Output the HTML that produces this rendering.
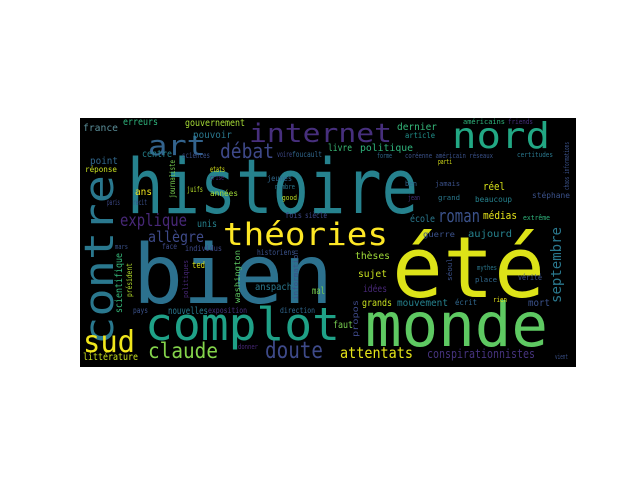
<!DOCTYPE html>
<html><head><meta charset="utf-8"><style>
html,body{margin:0;padding:0;background:#fff;width:640px;height:480px;overflow:hidden}
svg{display:block}
text{font-family:"DejaVu Sans Mono","Liberation Mono",monospace}
</style></head><body>
<svg width="640" height="480" viewBox="0 0 640 480" xmlns="http://www.w3.org/2000/svg">
<rect x="80" y="118" width="496" height="249" fill="#000"/>
<g>
<text x="127" y="213" font-size="76" fill="#26828e" textLength="291" lengthAdjust="spacingAndGlyphs">histoire</text>
<text x="133" y="303" font-size="82" fill="#2c718e" textLength="200" lengthAdjust="spacingAndGlyphs">bien</text>
<text x="392" y="297" font-size="85" fill="#dde318" textLength="153" lengthAdjust="spacingAndGlyphs">été</text>
<text x="365" y="346" font-size="61" fill="#5ec962" textLength="183" lengthAdjust="spacingAndGlyphs">monde</text>
<text x="145" y="340" font-size="45" fill="#1fa187" textLength="195" lengthAdjust="spacingAndGlyphs">complot</text>
<text transform="translate(113,345) rotate(-90)" font-size="40" fill="#2a788e" textLength="170" lengthAdjust="spacingAndGlyphs">contre</text>
<text x="249" y="142" font-size="26" fill="#472f7d" textLength="143" lengthAdjust="spacingAndGlyphs">internet</text>
<text x="452" y="148" font-size="36" fill="#22a884" textLength="98" lengthAdjust="spacingAndGlyphs">nord</text>
<text x="223" y="245" font-size="31" fill="#fde725" textLength="165" lengthAdjust="spacingAndGlyphs">théories</text>
<text x="148" y="155" font-size="28" fill="#33638d" textLength="58" lengthAdjust="spacingAndGlyphs">art</text>
<text x="220" y="158" font-size="20" fill="#3e4989" textLength="54" lengthAdjust="spacingAndGlyphs">débat</text>
<text x="83" y="352" font-size="30" fill="#f0e51c" textLength="52" lengthAdjust="spacingAndGlyphs">sud</text>
<text x="148" y="358" font-size="21" fill="#84d44b" textLength="70" lengthAdjust="spacingAndGlyphs">claude</text>
<text x="265" y="358" font-size="23" fill="#3e4a89" textLength="58" lengthAdjust="spacingAndGlyphs">doute</text>
<text x="120" y="226" font-size="17" fill="#482878" textLength="67" lengthAdjust="spacingAndGlyphs">explique</text>
<text x="148" y="242" font-size="15" fill="#3e4a89" textLength="56" lengthAdjust="spacingAndGlyphs">allègre</text>
<text x="438" y="222" font-size="18" fill="#3b528b" textLength="42" lengthAdjust="spacingAndGlyphs">roman</text>
<text transform="translate(561,303) rotate(-90)" font-size="14" fill="#2a788e" textLength="76" lengthAdjust="spacingAndGlyphs">septembre</text>
<text x="340" y="358" font-size="15" fill="#e5e419" textLength="73" lengthAdjust="spacingAndGlyphs">attentats</text>
<text x="427" y="358" font-size="12" fill="#46337e" textLength="108" lengthAdjust="spacingAndGlyphs">conspirationnistes</text>
<g font-size="10">
<text x="123" y="125" fill="#2fb47c" textLength="35" lengthAdjust="spacingAndGlyphs">erreurs</text>
<text x="185" y="126" fill="#a5db36" textLength="60" lengthAdjust="spacingAndGlyphs">gouvernement</text>
<text x="83" y="131" fill="#5b8f9a" textLength="35" lengthAdjust="spacingAndGlyphs">france</text>
<text x="193" y="138" fill="#2a788e" textLength="39" lengthAdjust="spacingAndGlyphs">pouvoir</text>
<text x="142" y="157" fill="#26828e" textLength="30" lengthAdjust="spacingAndGlyphs">centre</text>
<text x="90" y="164" fill="#31688e" textLength="28" lengthAdjust="spacingAndGlyphs">point</text>
<text x="85" y="172" fill="#c8e020" font-size="8" textLength="32" lengthAdjust="spacingAndGlyphs">réponse</text>
<text x="182" y="158" fill="#3b528b" font-size="8" textLength="28" lengthAdjust="spacingAndGlyphs">sciences</text>
<text x="277" y="157" fill="#3e4989" font-size="8" textLength="15" lengthAdjust="spacingAndGlyphs">voire</text>
<text x="292" y="157" fill="#31688e" font-size="8" textLength="30" lengthAdjust="spacingAndGlyphs">foucault</text>
<text x="210" y="172" fill="#d8e219" font-size="8" textLength="15" lengthAdjust="spacingAndGlyphs">etats</text>
<text x="210" y="180" fill="#482878" font-size="7" textLength="14" lengthAdjust="spacingAndGlyphs">crise</text>
<text transform="translate(175,198) rotate(-90)" fill="#7ad151" font-size="8" textLength="38" lengthAdjust="spacingAndGlyphs">journaliste</text>
<text x="135" y="195" fill="#f0e51c" textLength="17" lengthAdjust="spacingAndGlyphs">ans</text>
<text x="187" y="192" fill="#b5de2b" font-size="8" textLength="16" lengthAdjust="spacingAndGlyphs">juifs</text>
<text x="210" y="196" fill="#a0da39" font-size="8" textLength="28" lengthAdjust="spacingAndGlyphs">années</text>
<text x="267" y="181" fill="#31688e" font-size="8" textLength="25" lengthAdjust="spacingAndGlyphs">jeunes</text>
<text x="275" y="189" fill="#2a788e" font-size="7" textLength="20" lengthAdjust="spacingAndGlyphs">nombre</text>
<text x="107" y="205" fill="#3e4989" font-size="8" textLength="13" lengthAdjust="spacingAndGlyphs">paris</text>
<text x="133" y="205" fill="#3b528b" font-size="8" textLength="14" lengthAdjust="spacingAndGlyphs">récit</text>
<text x="282" y="200" fill="#bddf26" font-size="7" textLength="15" lengthAdjust="spacingAndGlyphs">good</text>
<text x="197" y="227" fill="#26828e" textLength="20" lengthAdjust="spacingAndGlyphs">unis</text>
<text x="285" y="218" fill="#3e4989" font-size="8" textLength="17" lengthAdjust="spacingAndGlyphs">fois</text>
<text x="305" y="218" fill="#3e4989" font-size="8" textLength="22" lengthAdjust="spacingAndGlyphs">siècle</text>
<text x="115" y="249" fill="#3b528b" font-size="7" textLength="13" lengthAdjust="spacingAndGlyphs">mars</text>
<text x="162" y="249" fill="#3e4989" font-size="8" textLength="15" lengthAdjust="spacingAndGlyphs">face</text>
<text x="185" y="251" fill="#3e4989" font-size="8" textLength="37" lengthAdjust="spacingAndGlyphs">individus</text>
<text x="257" y="255" fill="#3b528b" font-size="8" textLength="38" lengthAdjust="spacingAndGlyphs">historiens</text>
<text transform="translate(122,313) rotate(-90)" fill="#35b779" font-size="10" textLength="60" lengthAdjust="spacingAndGlyphs">scientifique</text>
<text transform="translate(132,297) rotate(-90)" fill="#b5de2b" font-size="8" textLength="34" lengthAdjust="spacingAndGlyphs">président</text>
<text transform="translate(188,298) rotate(-90)" fill="#482878" font-size="7" textLength="38" lengthAdjust="spacingAndGlyphs">politiques</text>
<text transform="translate(240,303) rotate(-90)" fill="#5ec962" font-size="8" textLength="53" lengthAdjust="spacingAndGlyphs">washington</text>
<text transform="translate(298,300) rotate(-90)" fill="#3b528b" font-size="7" textLength="50" lengthAdjust="spacingAndGlyphs">information</text>
<text x="192" y="268" fill="#d8e219" font-size="9" textLength="13" lengthAdjust="spacingAndGlyphs">ted</text>
<text x="255" y="290" fill="#2a788e" textLength="37" lengthAdjust="spacingAndGlyphs">anspach</text>
<text x="312" y="294" fill="#7ad151" textLength="13" lengthAdjust="spacingAndGlyphs">mal</text>
<text x="133" y="313" fill="#3b528b" font-size="8" textLength="15" lengthAdjust="spacingAndGlyphs">pays</text>
<text x="168" y="314" fill="#2a788e" textLength="40" lengthAdjust="spacingAndGlyphs">nouvelles</text>
<text x="208" y="313" fill="#46337e" font-size="8" textLength="39" lengthAdjust="spacingAndGlyphs">exposition</text>
<text x="280" y="313" fill="#31688e" font-size="8" textLength="35" lengthAdjust="spacingAndGlyphs">direction</text>
<text x="83" y="360" fill="#c8e020" textLength="55" lengthAdjust="spacingAndGlyphs">littérature</text>
<text x="238" y="349" fill="#482878" font-size="7" textLength="20" lengthAdjust="spacingAndGlyphs">donner</text>
<text x="397" y="130" fill="#35b779" textLength="40" lengthAdjust="spacingAndGlyphs">dernier</text>
<text x="463" y="124" fill="#2fb47c" font-size="7" textLength="42" lengthAdjust="spacingAndGlyphs">américains</text>
<text x="508" y="124" fill="#472f7d" font-size="7" textLength="25" lengthAdjust="spacingAndGlyphs">friends</text>
<text x="405" y="138" fill="#21918c" font-size="8" textLength="30" lengthAdjust="spacingAndGlyphs">article</text>
<text x="328" y="151" fill="#3aba76" textLength="24" lengthAdjust="spacingAndGlyphs">livre</text>
<text x="360" y="151" fill="#2fb47c" textLength="53" lengthAdjust="spacingAndGlyphs">politique</text>
<text x="377" y="158" fill="#31688e" font-size="7" textLength="15" lengthAdjust="spacingAndGlyphs">forme</text>
<text x="405" y="158" fill="#3b528b" font-size="7" textLength="88" lengthAdjust="spacingAndGlyphs">coréenne américain réseaux</text>
<text x="517" y="157" fill="#2a788e" font-size="7" textLength="36" lengthAdjust="spacingAndGlyphs">certitudes</text>
<text x="438" y="164" fill="#d8e219" font-size="7" textLength="14" lengthAdjust="spacingAndGlyphs">parti</text>
<text transform="translate(569,190) rotate(-90)" fill="#3b528b" font-size="7" textLength="48" lengthAdjust="spacingAndGlyphs">chaos informations</text>
<text x="483" y="190" fill="#d8e219" font-size="11" textLength="22" lengthAdjust="spacingAndGlyphs">réel</text>
<text x="405" y="186" fill="#31688e" font-size="7" textLength="12" lengthAdjust="spacingAndGlyphs">ben</text>
<text x="435" y="186" fill="#3b528b" font-size="7" textLength="25" lengthAdjust="spacingAndGlyphs">jamais</text>
<text x="438" y="200" fill="#2a788e" font-size="7" textLength="22" lengthAdjust="spacingAndGlyphs">grand</text>
<text x="475" y="202" fill="#26828e" font-size="8" textLength="37" lengthAdjust="spacingAndGlyphs">beaucoup</text>
<text x="532" y="198" fill="#3b528b" font-size="8" textLength="38" lengthAdjust="spacingAndGlyphs">stéphane</text>
<text x="408" y="200" fill="#46337e" font-size="7" textLength="12" lengthAdjust="spacingAndGlyphs">jean</text>
<text x="483" y="219" fill="#e5e419" font-size="11" textLength="34" lengthAdjust="spacingAndGlyphs">médias</text>
<text x="410" y="222" fill="#2a788e" textLength="25" lengthAdjust="spacingAndGlyphs">école</text>
<text x="523" y="220" fill="#2fb47c" font-size="7" textLength="27" lengthAdjust="spacingAndGlyphs">extrême</text>
<text x="423" y="237" fill="#3b528b" font-size="8" textLength="32" lengthAdjust="spacingAndGlyphs">guerre</text>
<text x="468" y="237" fill="#26828e" textLength="44" lengthAdjust="spacingAndGlyphs">aujourd</text>
<text x="355" y="259" fill="#a0da39" textLength="35" lengthAdjust="spacingAndGlyphs">thèses</text>
<text x="358" y="277" fill="#c8e020" textLength="29" lengthAdjust="spacingAndGlyphs">sujet</text>
<text transform="translate(452,281) rotate(-90)" fill="#3b528b" font-size="7" textLength="23" lengthAdjust="spacingAndGlyphs">séoul</text>
<text x="477" y="270" fill="#2a788e" font-size="7" textLength="20" lengthAdjust="spacingAndGlyphs">mythes</text>
<text x="475" y="282" fill="#31688e" font-size="7" textLength="22" lengthAdjust="spacingAndGlyphs">place</text>
<text x="518" y="280" fill="#3b528b" font-size="8" textLength="24" lengthAdjust="spacingAndGlyphs">vérité</text>
<text x="363" y="292" fill="#482878" textLength="24" lengthAdjust="spacingAndGlyphs">idées</text>
<text x="362" y="306" fill="#c8e020" textLength="30" lengthAdjust="spacingAndGlyphs">grands</text>
<text x="397" y="306" fill="#26828e" textLength="51" lengthAdjust="spacingAndGlyphs">mouvement</text>
<text x="455" y="305" fill="#31688e" font-size="8" textLength="22" lengthAdjust="spacingAndGlyphs">écrit</text>
<text x="493" y="302" fill="#e5e419" font-size="7" textLength="14" lengthAdjust="spacingAndGlyphs">rien</text>
<text x="528" y="306" fill="#3b528b" textLength="22" lengthAdjust="spacingAndGlyphs">mort</text>
<text transform="translate(358,337) rotate(-90)" fill="#3e4989" font-size="8" textLength="37" lengthAdjust="spacingAndGlyphs">propos</text>
<text x="333" y="328" fill="#7ad151" textLength="20" lengthAdjust="spacingAndGlyphs">faut</text>
<text x="555" y="359" fill="#3b528b" font-size="7" textLength="13" lengthAdjust="spacingAndGlyphs">vient</text>
</g>
</g>
</svg>
</body></html>
